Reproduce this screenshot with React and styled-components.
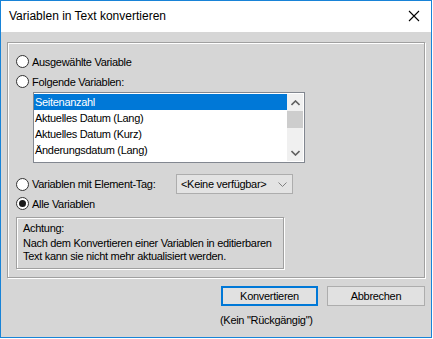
import styled, { createGlobalStyle } from "styled-components";

const Global = createGlobalStyle`
  html, body { margin: 0; padding: 0; background: #ffffff; }
  body {
    font-family: "Liberation Sans", Arial, sans-serif;
    font-size: 11px;
    letter-spacing: -0.3px;
    color: #000;
  }
`;

const ITEMS = [
  "Seitenanzahl",
  "Aktuelles Datum (Lang)",
  "Aktuelles Datum (Kurz)",
  "Änderungsdatum (Lang)",
];

export default function App() {
  return (
    <>
      <Global />
      <Window>
        <TitleBar>
          <Title>Variablen in Text konvertieren</Title>
          <CloseBtn>
            <svg width="12" height="12" viewBox="0 0 12 12">
              <path d="M1 1 L11 11 M11 1 L1 11" stroke="#000" strokeWidth="1.1" />
            </svg>
          </CloseBtn>
        </TitleBar>
        <Body>
          <Group>
            <Radio label="Ausgewählte Variable" />
            <Radio label="Folgende Variablen:" top={7} />
            <ListBox>
              <Rows>
                {ITEMS.map((it, i) => (
                  <Row key={it} selected={i === 0}>
                    {it}
                  </Row>
                ))}
              </Rows>
              <ScrollBar>
                <Arrow>
                  <svg width="9" height="6" viewBox="0 0 9 6">
                    <path d="M0.5 5 L4.5 1 L8.5 5" fill="none" stroke="#606060" strokeWidth="1.6" />
                  </svg>
                </Arrow>
                <Thumb />
                <Track />
                <Arrow>
                  <svg width="9" height="6" viewBox="0 0 9 6">
                    <path d="M0.5 1 L4.5 5 L8.5 1" fill="none" stroke="#606060" strokeWidth="1.6" />
                  </svg>
                </Arrow>
              </ScrollBar>
            </ListBox>
            <TagRow>
              <Radio label="Variablen mit Element-Tag:" />
              <Combo>
                <span>&lt;Keine verfügbar&gt;</span>
                <svg width="9" height="5" viewBox="0 0 9 5">
                  <path d="M0.5 0.5 L4.5 4.5 L8.5 0.5" fill="none" stroke="#808080" strokeWidth="1" />
                </svg>
              </Combo>
            </TagRow>
            <Radio label="Alle Variablen" checked top={3} />
            <Warning>
              <div>Achtung:</div>
              <WarnText>
                Nach dem Konvertieren einer Variablen in editierbaren
                <br />
                Text kann sie nicht mehr aktualisiert werden.
              </WarnText>
            </Warning>
          </Group>
          <Buttons>
            <Button primary>Konvertieren</Button>
            <Button>Abbrechen</Button>
          </Buttons>
          <Note>(Kein "Rückgängig")</Note>
        </Body>
      </Window>
    </>
  );
}

function Radio({ label, checked, top }) {
  return (
    <RadioRow top={top}>
      <Circle>{checked && <Dot />}</Circle>
      <span>{label}</span>
    </RadioRow>
  );
}

const Window = styled.div`
  width: 430px;
  height: 336px;
  border: 1px solid #1883d7;
  display: flex;
  flex-direction: column;
  background: #d6d6d6;
`;

const TitleBar = styled.div`
  height: 30px;
  background: #ffffff;
  display: flex;
  align-items: center;
  justify-content: space-between;
  padding: 0 10px 1px 8px;
`;

const Title = styled.div`
  font-size: 12px;
  letter-spacing: 0;
  color: #000;
`;

const CloseBtn = styled.div`
  display: flex;
  align-items: center;
  padding-right: 1px;
`;

const Body = styled.div`
  flex: 1;
  padding: 10px 6px 0 6px;
  display: flex;
  flex-direction: column;
`;

const etched = `
  border: 1px solid #a0a0a0;
  box-shadow: inset 1px 1px 0 #ffffff, 1px 1px 0 #ffffff;
`;

const Group = styled.div`
  ${etched}
  height: 236px;
  box-sizing: border-box;
  padding: 12px 0 0 8px;
  display: flex;
  flex-direction: column;
`;

const RadioRow = styled.div`
  display: flex;
  align-items: center;
  gap: 3px;
  height: 13px;
  margin-top: ${(p) => p.top || 0}px;
  white-space: nowrap;
`;

const Circle = styled.div`
  width: 11px;
  height: 11px;
  border: 1px solid #333333;
  border-radius: 50%;
  background: #ffffff;
  display: flex;
  align-items: center;
  justify-content: center;
  flex-shrink: 0;
`;

const Dot = styled.div`
  width: 7px;
  height: 7px;
  border-radius: 50%;
  background: #1a1a1a;
`;

const ListBox = styled.div`
  margin: 4px 0 0 17px;
  width: 270px;
  height: 69px;
  border: 1px solid #828790;
  background: #ffffff;
  display: flex;
`;

const Rows = styled.div`
  flex: 1;
  padding-top: 1px;
`;

const Row = styled.div`
  height: 16px;
  line-height: 16px;
  padding-left: 1px;
  white-space: nowrap;
  color: ${(p) => (p.selected ? "#ffffff" : "#000000")};
  background: ${(p) => (p.selected ? "#0078d7" : "transparent")};
`;

const ScrollBar = styled.div`
  width: 16px;
  margin: 1px 1px 1px 0;
  background: #f0f0f0;
  display: flex;
  flex-direction: column;
`;

const Arrow = styled.div`
  height: 17px;
  display: flex;
  align-items: center;
  justify-content: center;
`;

const Thumb = styled.div`
  height: 17px;
  background: #cdcdcd;
`;

const Track = styled.div`
  flex: 1;
`;

const TagRow = styled.div`
  display: flex;
  align-items: center;
  justify-content: space-between;
  width: 277px;
  margin-top: 11px;
`;

const Combo = styled.div`
  width: 117px;
  height: 20px;
  box-sizing: border-box;
  border: 1px solid #adadad;
  background: #e3e3e3;
  display: flex;
  align-items: center;
  justify-content: space-between;
  padding: 0 5px 0 4px;
  white-space: nowrap;
`;

const Warning = styled.div`
  ${etched}
  width: 268px;
  height: 52px;
  box-sizing: border-box;
  margin-top: 7px;
  padding: 4px 0 0 6px;
  white-space: nowrap;
`;

const WarnText = styled.div`
  margin-top: 3px;
  line-height: 13px;
`;

const Buttons = styled.div`
  display: flex;
  gap: 9px;
  margin: 8px 0 0 214px;
`;

const Button = styled.div`
  width: ${(p) => (p.primary ? "97px" : "98px")};
  height: 20px;
  box-sizing: border-box;
  border: ${(p) => (p.primary ? "2px solid #0078d7" : "1px solid #adadad")};
  background: #e1e1e1;
  display: flex;
  align-items: center;
  justify-content: center;
`;

const Note = styled.div`
  margin: 8px 0 0 213px;
`;
